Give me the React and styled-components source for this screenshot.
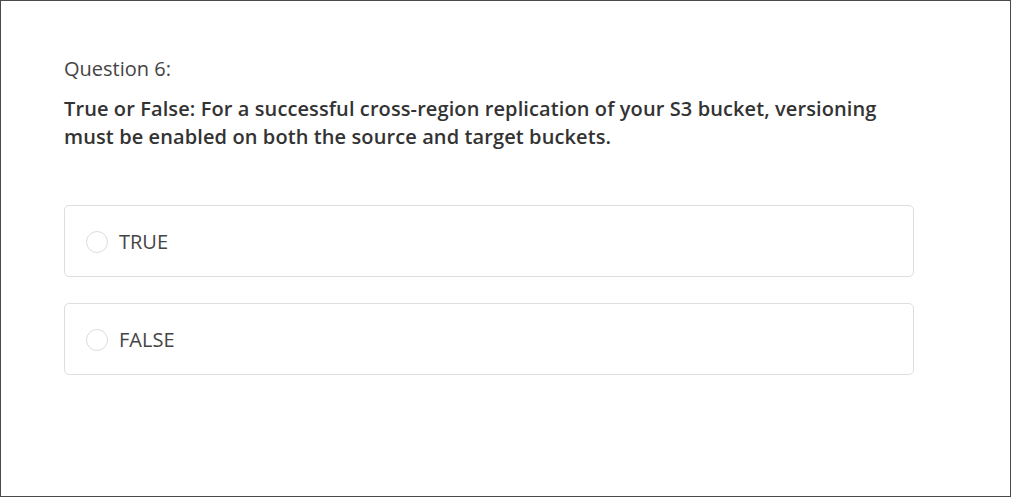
import styled, { createGlobalStyle } from "styled-components";

const GlobalStyle = createGlobalStyle`
  html, body {
    margin: 0;
    padding: 0;
    background: #fff;
  }
  body {
    font-family: "Open Sans", "Liberation Sans", sans-serif;
  }
`;

const Frame = styled.div`
  box-sizing: border-box;
  width: 1011px;
  height: 497px;
  border: 1px solid #4a4a4a;
  padding: 54px 0 0 63px;
`;

const QuestionNumber = styled.div`
  font-size: 20px;
  line-height: 28px;
  color: #444;
  margin-bottom: 12px;
`;

const Prompt = styled.div`
  width: 850px;
  font-size: 20px;
  font-weight: 600;
  line-height: 28px;
  letter-spacing: 0.1px;
  color: #333;
  margin-bottom: 54px;
`;

const Options = styled.div`
  display: flex;
  flex-direction: column;
  gap: 26px;
  width: 850px;
`;

const Option = styled.label`
  box-sizing: border-box;
  height: 72px;
  display: flex;
  align-items: center;
  gap: 11px;
  padding: 1px 0 0 21px;
  border: 1px solid #dedede;
  border-radius: 5px;
  cursor: pointer;
`;

const Radio = styled.span`
  box-sizing: border-box;
  width: 22px;
  height: 22px;
  border-radius: 50%;
  border: 1px solid #dcdcdc;
  background: #fff;
`;

const Label = styled.span`
  font-size: 20px;
  color: #444;
`;

const answers = ["TRUE", "FALSE"];

export default function App() {
  return (
    <>
      <GlobalStyle />
      <Frame>
        <QuestionNumber>Question 6:</QuestionNumber>
        <Prompt>
          True or False: For a successful cross-region replication of your S3
          bucket, versioning must be enabled on both the source and target
          buckets.
        </Prompt>
        <Options>
          {answers.map((a) => (
            <Option key={a}>
              <Radio />
              <Label>{a}</Label>
            </Option>
          ))}
        </Options>
      </Frame>
    </>
  );
}
